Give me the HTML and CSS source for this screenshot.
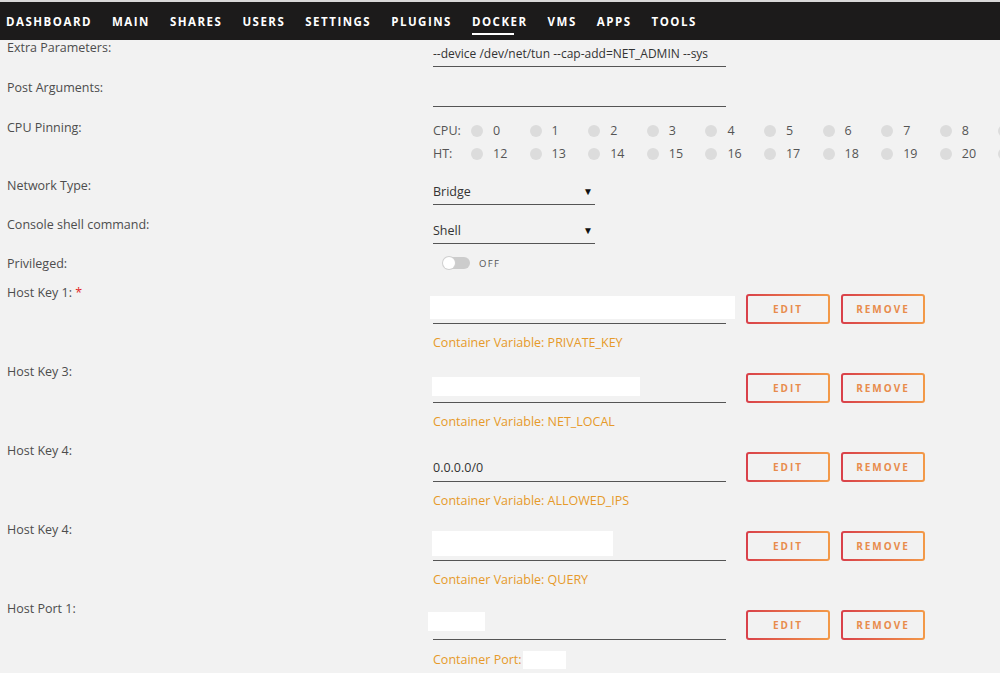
FILE: index.html
```html
<!DOCTYPE html>
<html>
<head>
<meta charset="utf-8">
<link rel="stylesheet" href="styles.css">
</head>
<body>
<div class="topline"></div>
<nav class="nav">
  <a>DASHBOARD</a><a>MAIN</a><a>SHARES</a><a>USERS</a><a>SETTINGS</a><a>PLUGINS</a><a class="active">DOCKER</a><a>VMS</a><a>APPS</a><a>TOOLS</a>
</nav>
<main class="form">
  <div class="row h40">
    <div class="label">Extra Parameters:</div>
    <div class="field"><div class="input">--device /dev/net/tun --cap-add=NET_ADMIN --sys</div></div>
  </div>
  <div class="row h40">
    <div class="label">Post Arguments:</div>
    <div class="field"><div class="input"></div></div>
  </div>
  <div class="row h58">
    <div class="label">CPU Pinning:</div>
    <div class="field cpus">
      <div class="cpuline"><span class="cpulabel">CPU:</span>
        <span class="cpu"><i></i>0</span><span class="cpu"><i></i>1</span><span class="cpu"><i></i>2</span><span class="cpu"><i></i>3</span><span class="cpu"><i></i>4</span><span class="cpu"><i></i>5</span><span class="cpu"><i></i>6</span><span class="cpu"><i></i>7</span><span class="cpu"><i></i>8</span><span class="cpu"><i></i></span>
      </div>
      <div class="cpuline"><span class="cpulabel">HT:</span>
        <span class="cpu"><i></i>12</span><span class="cpu"><i></i>13</span><span class="cpu"><i></i>14</span><span class="cpu"><i></i>15</span><span class="cpu"><i></i>16</span><span class="cpu"><i></i>17</span><span class="cpu"><i></i>18</span><span class="cpu"><i></i>19</span><span class="cpu"><i></i>20</span><span class="cpu"><i></i></span>
      </div>
    </div>
  </div>
  <div class="row h39">
    <div class="label">Network Type:</div>
    <div class="field"><div class="select"><span>Bridge</span><span class="arrow">&#9660;</span></div></div>
  </div>
  <div class="row h39">
    <div class="label">Console shell command:</div>
    <div class="field"><div class="select"><span>Shell</span><span class="arrow">&#9660;</span></div></div>
  </div>
  <div class="row h29">
    <div class="label">Privileged:</div>
    <div class="field"><div class="switch"><span class="track"><span class="knob"></span></span><span class="offtxt">OFF</span></div></div>
  </div>

  <div class="row host">
    <div class="label">Host Key 1: <span class="req">*</span></div>
    <div class="field">
      <div class="hostline">
        <div class="hinput"><span class="redact r1"></span></div>
        <button class="btn">EDIT</button><button class="btn">REMOVE</button>
      </div>
      <div class="desc">Container Variable: PRIVATE_KEY</div>
    </div>
  </div>
  <div class="row host">
    <div class="label">Host Key 3:</div>
    <div class="field">
      <div class="hostline">
        <div class="hinput"><span class="redact r3"></span></div>
        <button class="btn">EDIT</button><button class="btn">REMOVE</button>
      </div>
      <div class="desc">Container Variable: NET_LOCAL</div>
    </div>
  </div>
  <div class="row host">
    <div class="label">Host Key 4:</div>
    <div class="field">
      <div class="hostline">
        <div class="hinput">0.0.0.0/0</div>
        <button class="btn">EDIT</button><button class="btn">REMOVE</button>
      </div>
      <div class="desc">Container Variable: ALLOWED_IPS</div>
    </div>
  </div>
  <div class="row host">
    <div class="label">Host Key 4:</div>
    <div class="field">
      <div class="hostline">
        <div class="hinput"><span class="redact r4"></span></div>
        <button class="btn">EDIT</button><button class="btn">REMOVE</button>
      </div>
      <div class="desc">Container Variable: QUERY</div>
    </div>
  </div>
  <div class="row host">
    <div class="label">Host Port 1:</div>
    <div class="field">
      <div class="hostline">
        <div class="hinput"><span class="redact r5"></span></div>
        <button class="btn">EDIT</button><button class="btn">REMOVE</button>
      </div>
      <div class="desc">Container Port:<span class="redact-inline"></span></div>
    </div>
  </div>
</main>
</body>
</html>
```

FILE: styles.css
```css
html, body {
  margin: 0;
  padding: 0;
  overflow: hidden;
}
body {
  background: #f2f2f2;
  font-family: "Open Sans", "Liberation Sans", sans-serif;
  color: #4a4a4a;
  width: 1000px;
  height: 673px;
}
.topline {
  height: 2px;
  background: #d8d8d8;
}
.nav {
  height: 38px;
  background: #1c1b1b;
  display: flex;
  gap: 20px;
  padding-left: 6px;
  align-items: stretch;
}
.nav a {
  color: #fff;
  font-weight: 700;
  font-size: 11.5px;
  letter-spacing: 1.5px;
  line-height: 39px;
  position: relative;
}
.nav a.active::after {
  content: "";
  position: absolute;
  left: 0;
  width: 42px;
  top: 31px;
  height: 2px;
  background: #fff;
}
.form {
  display: block;
}
.row {
  display: flex;
  align-items: flex-start;
}
.h40 { height: 40px; }
.h58 { height: 58px; }
.h39 { height: 39px; }
.h29 { height: 29px; }
.host { height: 79px; }
.label {
  width: 426px;
  padding-left: 7px;
  font-size: 12.5px;
  line-height: 16px;
  color: #4d4d4d;
  flex: none;
}
.req { color: #e22828; }
.field {
  flex: 1;
  min-width: 0;
}
.input {
  width: 293px;
  height: 25px;
  margin-top: 1px;
  border-bottom: 1px solid #555;
  font-size: 12px;
  line-height: 25px;
  color: #333;
  white-space: nowrap;
  overflow: hidden;
}
.cpus {
  margin-top: -1px;
  overflow: hidden;
  white-space: nowrap;
}
.cpuline {
  height: 23px;
  display: flex;
  align-items: center;
  font-size: 12.5px;
  color: #555;
}
.cpulabel {
  width: 38px;
  flex: none;
}
.cpu {
  width: 58.6px;
  flex: none;
  display: flex;
  align-items: center;
  gap: 10px;
}
.cpu i {
  width: 12px;
  height: 12px;
  border-radius: 50%;
  background: #dcdcdc;
  display: block;
}
.select {
  width: 162px;
  height: 26px;
  border-bottom: 1px solid #555;
  display: flex;
  justify-content: space-between;
  align-items: center;
  font-size: 12.5px;
  color: #333;
}
.select .arrow {
  font-size: 10px;
  color: #111;
  margin-right: 2px;
}
.switch {
  display: flex;
  align-items: center;
  height: 14px;
  padding-left: 10px;
}
.track {
  width: 27px;
  height: 12px;
  border-radius: 6px;
  background: #cccccc;
  position: relative;
  display: block;
}
.knob {
  position: absolute;
  left: 0;
  top: 0;
  width: 12px;
  height: 12px;
  border-radius: 50%;
  background: #fff;
  box-shadow: 0 0 0 1px #cfcfcf;
}
.offtxt {
  font-size: 9.5px;
  letter-spacing: 1.4px;
  color: #555;
  margin-left: 9px;
}
.hostline {
  display: flex;
  align-items: flex-start;
  margin-top: 10px;
}
.hinput {
  width: 293px;
  height: 28px;
  border-bottom: 1px solid #555;
  flex: none;
  position: relative;
  font-size: 12.5px;
  line-height: 30px;
  color: #333;
}
.redact {
  position: absolute;
  background: #fff;
}
.r1 { left: -3px; top: 1px; width: 305px; height: 23px; }
.r3 { left: -1px; top: 3px; width: 208px; height: 19px; }
.r4 { left: -1px; top: -1px; width: 181px; height: 25px; }
.r5 { left: -5px; top: 1px; width: 57px; height: 19px; }
.btn {
  flex: none;
  width: 84px;
  height: 30px;
  margin-left: 20px;
  border: 2px solid transparent;
  border-radius: 3px;
  background: linear-gradient(#f2f2f2, #f2f2f2) padding-box,
              linear-gradient(90deg, #d9404a, #f39a48) border-box;
  color: #e88c4c;
  font-family: "Open Sans", "Liberation Sans", sans-serif;
  font-weight: 700;
  font-size: 10px;
  letter-spacing: 2px;
  padding: 0;
  margin-top: -1px;
}
.btn + .btn {
  margin-left: 11px;
}
.desc {
  margin-top: 11px;
  font-size: 12.5px;
  line-height: 16px;
  color: #e69a2a;
  display: flex;
  align-items: center;
}
.redact-inline {
  display: inline-block;
  width: 43px;
  height: 18px;
  background: #fff;
  margin-left: 1px;
}
```
